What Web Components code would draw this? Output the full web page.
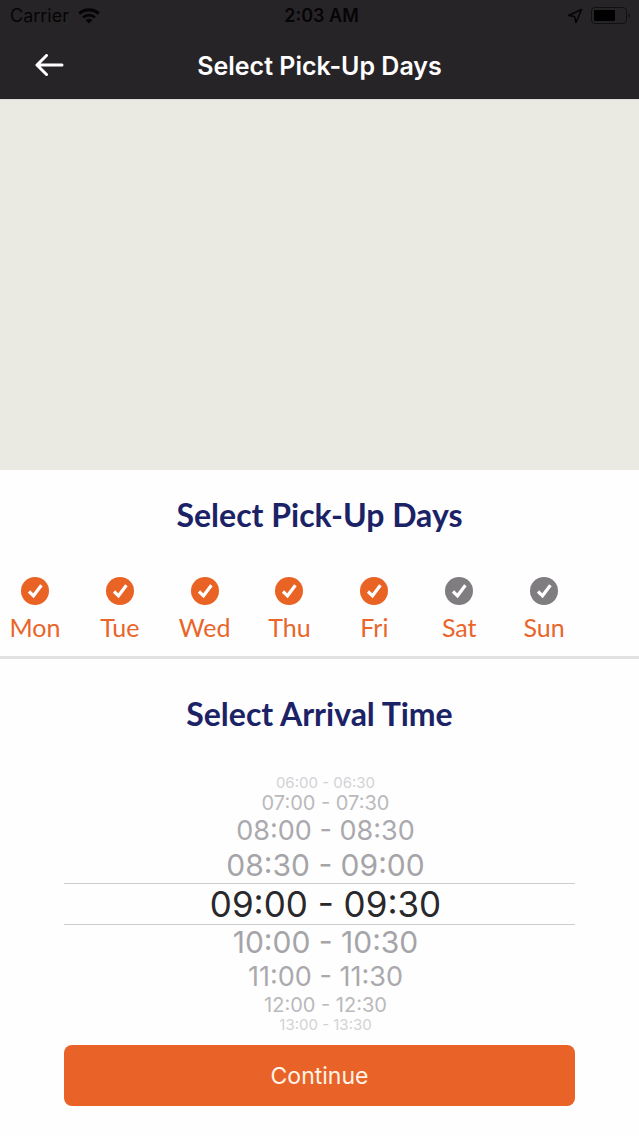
<!DOCTYPE html>
<html lang="en">
<head>
<meta charset="utf-8">
<meta name="viewport" content="width=device-width, initial-scale=1">
<title>Select Pick-Up Days</title>
<style>
  html, body { margin: 0; min-height: 100%; background: #fefefe; }
  body { font-family: Inter, "Liberation Sans", sans-serif; }
</style>
</head>
<body>
<pickup-screen></pickup-screen>
<script>
const define = (name, html, setup) => {
  const template = document.createElement('template');
  template.innerHTML = html;
  customElements.define(name, class extends HTMLElement {
    connectedCallback() {
      if (this.shadowRoot) return;
      this.attachShadow({ mode: 'open' }).append(template.content.cloneNode(true));
      if (setup) setup(this, this.shadowRoot);
    }
  });
};

define('status-bar', `
  <style>
    :host { display: grid; grid-template-columns: 1fr auto 1fr; align-items: center; height: 32px; padding: 0 8px 0 10px; color: #050505; font-size: 18px; line-height: 24px; }
    .side { display: flex; align-items: center; gap: 9px; }
    .end { justify-content: flex-end; gap: 8px; }
    .time { font-weight: 600; padding-left: 2px; }
    svg { display: block; }
  </style>
  <div class="side">
    <span>Carrier</span>
    <svg width="22" height="16" viewBox="0 0 22 16" fill="none" stroke="currentColor">
      <path d="M1.3 5.6C6.800 .6 15.200 .6 20.700 5.600" stroke-width="3.200"/>
      <path d="M5 9.500C8.500 6.400 13.500 6.400 17 9.500" stroke-width="2.800"/>
      <path d="M11 15.500L7.600 12C9.600 10.300 12.400 10.300 14.400 12Z" fill="currentColor" stroke="none"/>
    </svg>
  </div>
  <span class="time">2:03 AM</span>
  <div class="side end">
    <svg width="16" height="16" viewBox="0 0 16 16" fill="none" stroke="currentColor" stroke-width="1.600" stroke-linejoin="round"><path d="M14.500 1.500L1.500 7.500L7.500 8.500L9 14.500Z"/></svg>
    <svg width="40" height="18" viewBox="0 0 40 18"><rect x=".5" y=".5" width="35" height="16" rx="3.500" fill="none" stroke="#111013"/><rect x="3" y="3" width="21" height="11" rx="1" fill="#000"/><path d="M37.500 6.500c2 .5 2 3.500 0 4z" fill="#111013"/></svg>
  </div>`);

define('nav-header', `
  <style>
    :host { display: grid; grid-template-columns: 66px 1fr 66px; align-items: center; height: 67px; padding: 0 16px; color: #fff; }
    button { display: grid; place-items: center; justify-self: center; width: 48px; height: 48px; padding: 0; border: 0; background: none; color: inherit; }
    h1 { margin: 0; text-align: center; font-size: 25px; line-height: 32px; font-weight: 600; }
  </style>
  <button type="button" aria-label="Back">
    <svg width="30" height="24" viewBox="0 0 30 24" fill="none" stroke="currentColor" stroke-width="3" stroke-linecap="round" stroke-linejoin="round"><path d="M28 11H3M12.500 1.500L3 11L12.500 20.500"/></svg>
  </button>
  <h1><slot></slot></h1>`);

define('section-title', `
  <style>
    :host { display: block; }
    h2 { margin: 0; color: #1b2266; text-align: center; font: 700 32px/40px Lato, "Open Sans", sans-serif; }
  </style>
  <h2><slot></slot></h2>`);

define('day-toggle', `
  <style>
    :host { display: block; min-width: 0; }
    label { display: flex; flex-direction: column; align-items: center; gap: 6px; color: #e96529; font: 400 25px/32px Lato, "Open Sans", sans-serif; }
    .mark { display: grid; }
    input, svg { grid-area: 1 / 1; width: 28px; height: 28px; margin: 0; }
    input { appearance: none; border-radius: 50%; background: #807d81; }
    input:checked { background: #e96325; }
    svg { pointer-events: none; }
  </style>
  <label>
    <span class="mark"><input type="checkbox"><svg viewBox="0 0 28 28" fill="none" stroke="#fff" stroke-width="3.200"><path d="M8 14.500L12.500 18.800L20.400 8.200"/></svg></span>
    <slot></slot>
  </label>`, (host, root) => { root.querySelector('input').checked = host.hasAttribute('on'); });

define('time-wheel', `
  <style>
    :host { display: block; }
    fieldset { margin: 0; padding: 0; border: 0; min-width: 0; display: flex; flex-direction: column; }
    label { display: block; box-sizing: border-box; padding-left: 12px; text-align: center; white-space: nowrap; color: #a5a4a8; }
    input { appearance: none; position: absolute; margin: 0; opacity: 0; pointer-events: none; }
    .far { font-size: 15px; line-height: 18px; color: #d3d2d5; }
    .mid { font-size: 20px; line-height: 22px; color: #bab9bd; }
    .near { font-size: 27px; line-height: 34px; color: #aaa9ad; }
    .next { font-size: 30px; line-height: 35px; }
    .picked { font-size: 35px; line-height: 40px; color: #29282b; border: solid #cdccd0; border-width: 1px 0; }
  </style>
  <fieldset aria-label="Arrival time"></fieldset>`, (host, root) => {
  const box = root.querySelector('fieldset');
  [['06:00 - 06:30', 'far'], ['07:00 - 07:30', 'mid'], ['08:00 - 08:30', 'near'], ['08:30 - 09:00', 'next'],
   ['09:00 - 09:30', 'picked'], ['10:00 - 10:30', 'next'], ['11:00 - 11:30', 'near'], ['12:00 - 12:30', 'mid'],
   ['13:00 - 13:30', 'far']].forEach(([text, size]) => {
    const label = document.createElement('label');
    label.className = size;
    const input = document.createElement('input');
    input.type = 'radio';
    input.name = 'slot';
    input.checked = size === 'picked';
    label.append(input, text);
    box.append(label);
  });
});

define('primary-button', `
  <style>
    :host { display: block; }
    button { display: block; width: 100%; height: 61px; padding: 0; border: 0; border-radius: 8px; background: #e96329; color: #fff4e8; font: 400 23px/32px Inter, "Liberation Sans", sans-serif; }
  </style>
  <button type="button"><slot></slot></button>`);

define('pickup-screen', `
  <style>
    :host { display: flex; flex-direction: column; min-height: 100vh; }
    header { background: #272428; }
    .map { flex: 1; min-height: 200px; background: #ebeae2; border-top: 1px solid #dddcda; box-sizing: border-box; }
    .days { padding-top: 25px; border-bottom: 3px solid #e2e2e2; }
    .row { display: grid; grid-template-columns: repeat(7, 1fr); gap: 15px; padding: 42px 60px 13px 0; }
    .arrival { padding: 35px 10% 30px; }
    time-wheel { padding: 40px 0 11px; }
  </style>
  <header><status-bar></status-bar><nav-header>Select Pick-Up Days</nav-header></header>
  <div class="map"></div>
  <section class="days">
    <section-title>Select Pick-Up Days</section-title>
    <div class="row">
      <day-toggle on>Mon</day-toggle><day-toggle on>Tue</day-toggle><day-toggle on>Wed</day-toggle><day-toggle on>Thu</day-toggle><day-toggle on>Fri</day-toggle><day-toggle>Sat</day-toggle><day-toggle>Sun</day-toggle>
    </div>
  </section>
  <section class="arrival">
    <section-title>Select Arrival Time</section-title>
    <time-wheel></time-wheel>
    <primary-button>Continue</primary-button>
  </section>`);
</script>
</body>
</html>
